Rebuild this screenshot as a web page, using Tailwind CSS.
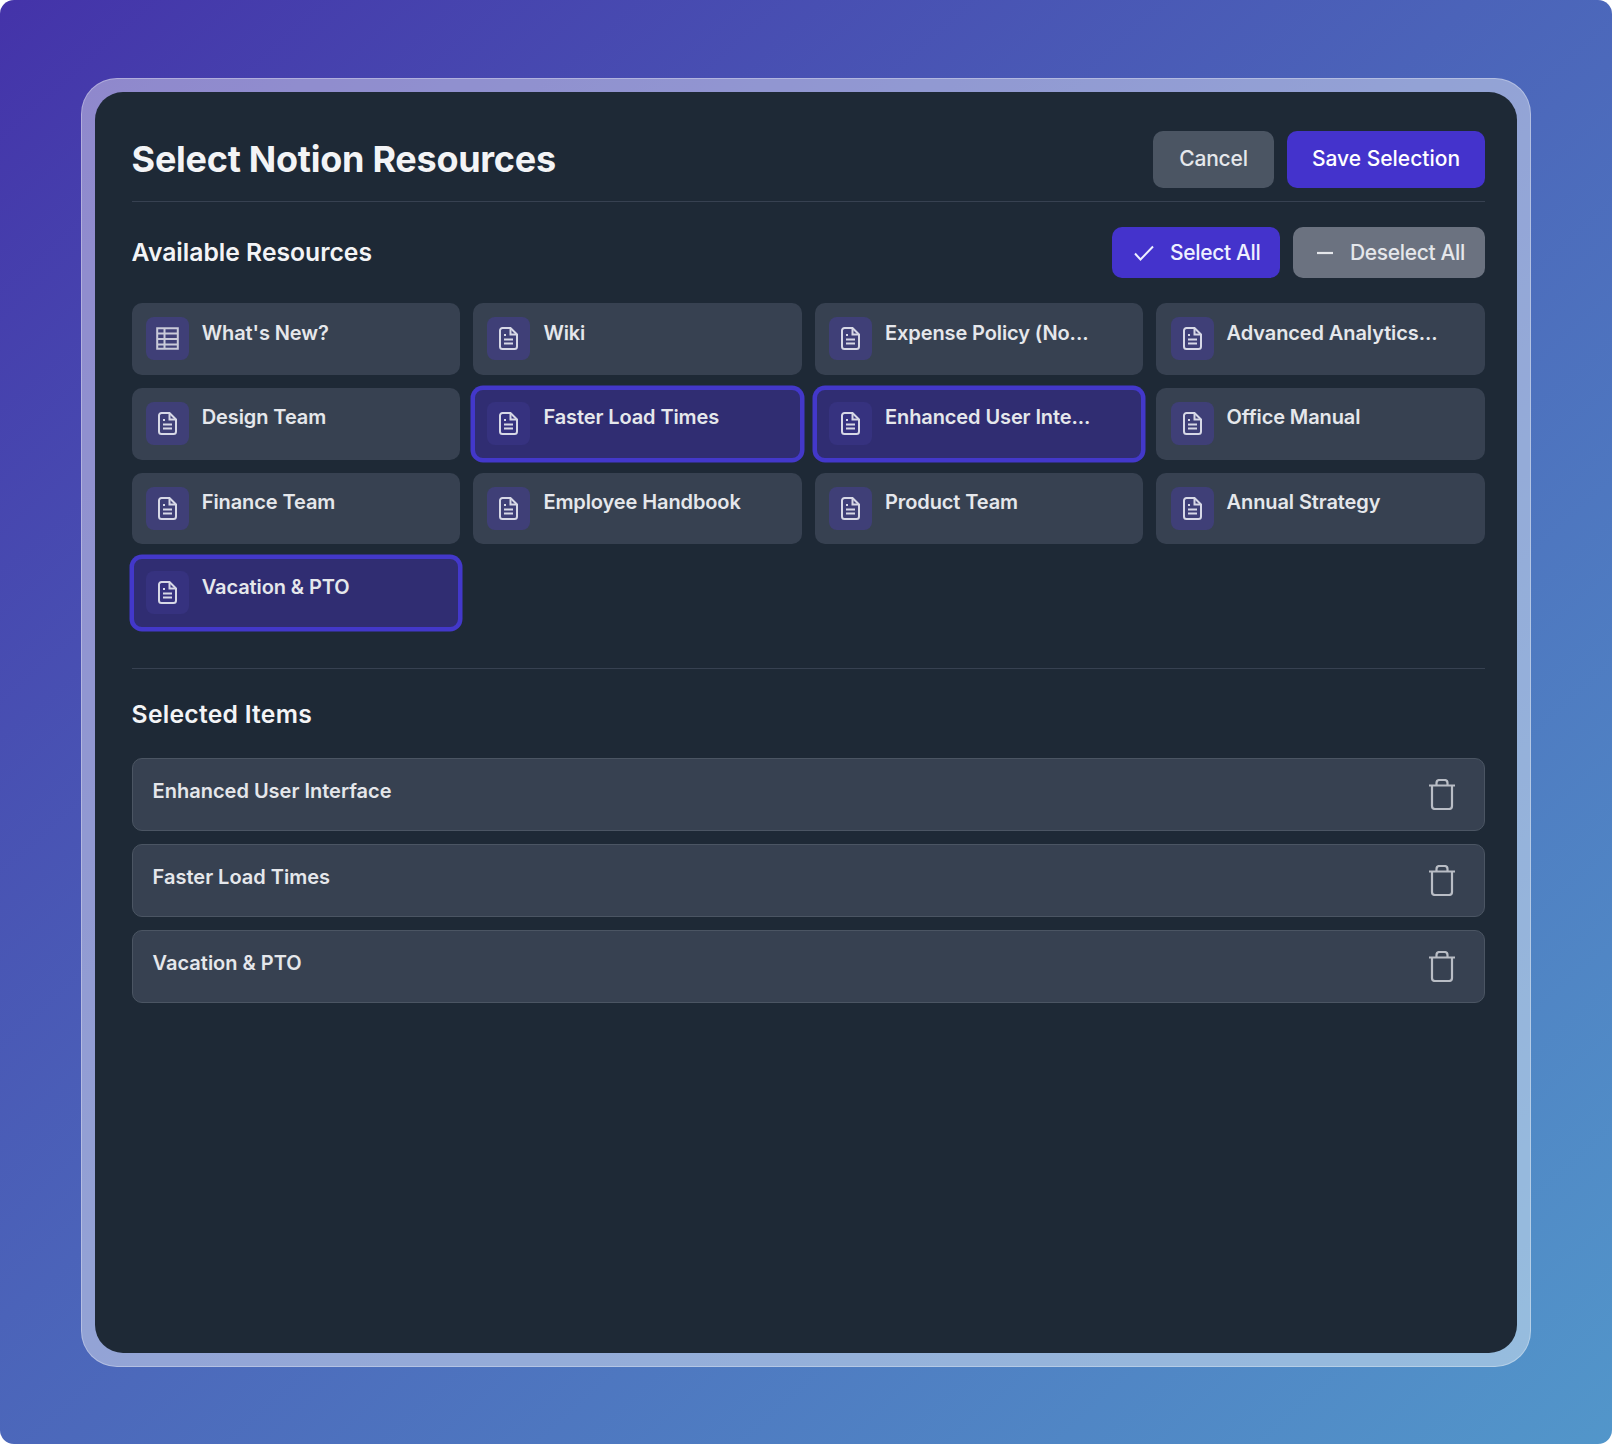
<!DOCTYPE html>
<html lang="en">
<head>
  <meta charset="UTF-8" />
  <title>Select Notion Resources</title>
  <script src="https://cdn.jsdelivr.net/npm/@tailwindcss/browser@4"></script>
</head>
<body class="bg-white">
  <div class="w-[1612px] h-[1444px] rounded-[14px] bg-gradient-to-br from-[#4433a9] to-[#5296ca] pt-[78px] pl-[81px] font-['Inter',sans-serif]">
    <div class="w-[1450px] h-[1289px] rounded-[36px] bg-white/40 border border-white/30 p-[13px]">
      <div class="h-full rounded-[28px] bg-[#1e2936] pt-[38.5px] pl-[36.6px] pr-[32px]">

        <!-- header -->
        <div class="flex items-center justify-between pb-[13px] border-b border-[#374151]">
          <h1 class="text-[36px] leading-[57px] font-bold tracking-[-0.27px] text-[#f3f4f6]">Select Notion Resources</h1>
          <div class="flex gap-[13px]">
            <button class="h-[57px] w-[121px] rounded-[10px] bg-[#4b5563] text-[21px] font-medium tracking-[-0.2px] text-[#e5e7eb]">Cancel</button>
            <button class="h-[57px] w-[198px] rounded-[10px] bg-[#4433cc] text-[21px] font-medium text-white">Save Selection</button>
          </div>
        </div>

        <!-- available -->
        <div class="mt-[25.5px] flex items-center justify-between">
          <h2 class="text-[24.7px] font-semibold text-[#f3f4f6]">Available Resources</h2>
          <div class="flex gap-[13px]">
            <button class="h-[51px] w-[168px] rounded-[10px] bg-[#4433cc] flex items-center pl-[22px] gap-[16px] text-[21px] font-medium tracking-[-0.35px] text-[#eef0ff]">
              <svg class="w-[20px] h-[16px]" viewBox="0 0 20 16" fill="none" stroke="currentColor" stroke-width="2"><path d="M1 8.5l5.5 6L19 1.5"/></svg>
              Select All
            </button>
            <button class="h-[51px] w-[192px] rounded-[10px] bg-[#6b7280] flex items-center pl-[24px] gap-[17px] text-[21px] font-medium tracking-[-0.35px] text-[#e5e7eb]">
              <svg class="w-[16px] h-[16px]" viewBox="0 0 16 16" fill="none" stroke="currentColor" stroke-width="2.2"><path d="M0 8h16"/></svg>
              Deselect All
            </button>
          </div>
        </div>

        <div class="mt-[25px] grid grid-cols-4 gap-x-[13px] gap-y-[13px] auto-rows-[71.8px] tracking-[-0.1px]">
          <div class="rounded-[10px] bg-[#374151] flex items-start gap-[13px] pl-[14.2px] pt-[14px]">
            <span class="w-[43px] h-[43px] rounded-[8px] bg-[#3f3f77] flex items-center justify-center text-[#c9cad9]">
              <svg class="w-[23px] h-[23px]" viewBox="0 0 23 23" fill="none" stroke="currentColor" stroke-width="2"><path d="M1.2 1.2h20.6v20.6H1.2zM1 6.5h21M1 12h21M1 17.5h21M8.5 1v21"/></svg>
            </span>
            <span class="pt-[3px] text-[20px] leading-[26px] font-semibold text-[#e5e7eb]">What's New?</span>
          </div>
          <div class="rounded-[10px] bg-[#374151] flex items-start gap-[13px] pl-[14.2px] pt-[14px]">
            <span class="w-[43px] h-[43px] rounded-[8px] bg-[#3f3f77] flex items-center justify-center text-[#d7d8e6]">
              <svg class="w-[19px] h-[23px]" viewBox="0 0 19 23" fill="none" stroke="currentColor" stroke-width="2"><path d="M3.5 1h8L18 7.5V19.5a2.5 2.5 0 0 1-2.5 2.5h-12A2.5 2.5 0 0 1 1 19.5v-16A2.5 2.5 0 0 1 3.5 1z"/><path d="M11.5 1v6.5H18M5 8h2M5 12.5h9M5 16.5h9"/></svg>
            </span>
            <span class="pt-[3px] text-[20px] leading-[26px] font-semibold text-[#e5e7eb]">Wiki</span>
          </div>
          <div class="rounded-[10px] bg-[#374151] flex items-start gap-[13px] pl-[14.2px] pt-[14px]">
            <span class="w-[43px] h-[43px] rounded-[8px] bg-[#3f3f77] flex items-center justify-center text-[#d7d8e6]">
              <svg class="w-[19px] h-[23px]" viewBox="0 0 19 23" fill="none" stroke="currentColor" stroke-width="2"><path d="M3.5 1h8L18 7.5V19.5a2.5 2.5 0 0 1-2.5 2.5h-12A2.5 2.5 0 0 1 1 19.5v-16A2.5 2.5 0 0 1 3.5 1z"/><path d="M11.5 1v6.5H18M5 8h2M5 12.5h9M5 16.5h9"/></svg>
            </span>
            <span class="pt-[3px] text-[20px] leading-[26px] font-semibold text-[#e5e7eb]">Expense Policy (No...</span>
          </div>
          <div class="rounded-[10px] bg-[#374151] flex items-start gap-[13px] pl-[14.2px] pt-[14px]">
            <span class="w-[43px] h-[43px] rounded-[8px] bg-[#3f3f77] flex items-center justify-center text-[#d7d8e6]">
              <svg class="w-[19px] h-[23px]" viewBox="0 0 19 23" fill="none" stroke="currentColor" stroke-width="2"><path d="M3.5 1h8L18 7.5V19.5a2.5 2.5 0 0 1-2.5 2.5h-12A2.5 2.5 0 0 1 1 19.5v-16A2.5 2.5 0 0 1 3.5 1z"/><path d="M11.5 1v6.5H18M5 8h2M5 12.5h9M5 16.5h9"/></svg>
            </span>
            <span class="pt-[3px] text-[20px] leading-[26px] font-semibold text-[#e5e7eb]">Advanced Analytics...</span>
          </div>

          <div class="rounded-[10px] bg-[#374151] flex items-start gap-[13px] pl-[14.2px] pt-[14px]">
            <span class="w-[43px] h-[43px] rounded-[8px] bg-[#3f3f77] flex items-center justify-center text-[#d7d8e6]">
              <svg class="w-[19px] h-[23px]" viewBox="0 0 19 23" fill="none" stroke="currentColor" stroke-width="2"><path d="M3.5 1h8L18 7.5V19.5a2.5 2.5 0 0 1-2.5 2.5h-12A2.5 2.5 0 0 1 1 19.5v-16A2.5 2.5 0 0 1 3.5 1z"/><path d="M11.5 1v6.5H18M5 8h2M5 12.5h9M5 16.5h9"/></svg>
            </span>
            <span class="pt-[2px] text-[20px] leading-[26px] font-semibold text-[#e5e7eb]">Design Team</span>
          </div>
          <div class="rounded-[10px] bg-[#302d72] border-2 border-[#4338ca] ring-[2.5px] ring-[#4338ca] flex items-start gap-[13px] pl-[12.2px] pt-[12px]">
            <span class="w-[43px] h-[43px] rounded-[8px] bg-[#36327f] flex items-center justify-center text-[#d7d8e6]">
              <svg class="w-[19px] h-[23px]" viewBox="0 0 19 23" fill="none" stroke="currentColor" stroke-width="2"><path d="M3.5 1h8L18 7.5V19.5a2.5 2.5 0 0 1-2.5 2.5h-12A2.5 2.5 0 0 1 1 19.5v-16A2.5 2.5 0 0 1 3.5 1z"/><path d="M11.5 1v6.5H18M5 8h2M5 12.5h9M5 16.5h9"/></svg>
            </span>
            <span class="pt-[2px] text-[20px] leading-[26px] font-semibold text-[#e5e7eb]">Faster Load Times</span>
          </div>
          <div class="rounded-[10px] bg-[#302d72] border-2 border-[#4338ca] ring-[2.5px] ring-[#4338ca] flex items-start gap-[13px] pl-[12.2px] pt-[12px]">
            <span class="w-[43px] h-[43px] rounded-[8px] bg-[#36327f] flex items-center justify-center text-[#d7d8e6]">
              <svg class="w-[19px] h-[23px]" viewBox="0 0 19 23" fill="none" stroke="currentColor" stroke-width="2"><path d="M3.5 1h8L18 7.5V19.5a2.5 2.5 0 0 1-2.5 2.5h-12A2.5 2.5 0 0 1 1 19.5v-16A2.5 2.5 0 0 1 3.5 1z"/><path d="M11.5 1v6.5H18M5 8h2M5 12.5h9M5 16.5h9"/></svg>
            </span>
            <span class="pt-[2px] text-[20px] leading-[26px] font-semibold text-[#e5e7eb]">Enhanced User Inte...</span>
          </div>
          <div class="rounded-[10px] bg-[#374151] flex items-start gap-[13px] pl-[14.2px] pt-[14px]">
            <span class="w-[43px] h-[43px] rounded-[8px] bg-[#3f3f77] flex items-center justify-center text-[#d7d8e6]">
              <svg class="w-[19px] h-[23px]" viewBox="0 0 19 23" fill="none" stroke="currentColor" stroke-width="2"><path d="M3.5 1h8L18 7.5V19.5a2.5 2.5 0 0 1-2.5 2.5h-12A2.5 2.5 0 0 1 1 19.5v-16A2.5 2.5 0 0 1 3.5 1z"/><path d="M11.5 1v6.5H18M5 8h2M5 12.5h9M5 16.5h9"/></svg>
            </span>
            <span class="pt-[2px] text-[20px] leading-[26px] font-semibold text-[#e5e7eb]">Office Manual</span>
          </div>

          <div class="rounded-[10px] bg-[#374151] flex items-start gap-[13px] pl-[14.2px] pt-[14px]">
            <span class="w-[43px] h-[43px] rounded-[8px] bg-[#3f3f77] flex items-center justify-center text-[#d7d8e6]">
              <svg class="w-[19px] h-[23px]" viewBox="0 0 19 23" fill="none" stroke="currentColor" stroke-width="2"><path d="M3.5 1h8L18 7.5V19.5a2.5 2.5 0 0 1-2.5 2.5h-12A2.5 2.5 0 0 1 1 19.5v-16A2.5 2.5 0 0 1 3.5 1z"/><path d="M11.5 1v6.5H18M5 8h2M5 12.5h9M5 16.5h9"/></svg>
            </span>
            <span class="pt-[2px] text-[20px] leading-[26px] font-semibold text-[#e5e7eb]">Finance Team</span>
          </div>
          <div class="rounded-[10px] bg-[#374151] flex items-start gap-[13px] pl-[14.2px] pt-[14px]">
            <span class="w-[43px] h-[43px] rounded-[8px] bg-[#3f3f77] flex items-center justify-center text-[#d7d8e6]">
              <svg class="w-[19px] h-[23px]" viewBox="0 0 19 23" fill="none" stroke="currentColor" stroke-width="2"><path d="M3.5 1h8L18 7.5V19.5a2.5 2.5 0 0 1-2.5 2.5h-12A2.5 2.5 0 0 1 1 19.5v-16A2.5 2.5 0 0 1 3.5 1z"/><path d="M11.5 1v6.5H18M5 8h2M5 12.5h9M5 16.5h9"/></svg>
            </span>
            <span class="pt-[2px] text-[20px] leading-[26px] font-semibold text-[#e5e7eb]">Employee Handbook</span>
          </div>
          <div class="rounded-[10px] bg-[#374151] flex items-start gap-[13px] pl-[14.2px] pt-[14px]">
            <span class="w-[43px] h-[43px] rounded-[8px] bg-[#3f3f77] flex items-center justify-center text-[#d7d8e6]">
              <svg class="w-[19px] h-[23px]" viewBox="0 0 19 23" fill="none" stroke="currentColor" stroke-width="2"><path d="M3.5 1h8L18 7.5V19.5a2.5 2.5 0 0 1-2.5 2.5h-12A2.5 2.5 0 0 1 1 19.5v-16A2.5 2.5 0 0 1 3.5 1z"/><path d="M11.5 1v6.5H18M5 8h2M5 12.5h9M5 16.5h9"/></svg>
            </span>
            <span class="pt-[2px] text-[20px] leading-[26px] font-semibold text-[#e5e7eb]">Product Team</span>
          </div>
          <div class="rounded-[10px] bg-[#374151] flex items-start gap-[13px] pl-[14.2px] pt-[14px]">
            <span class="w-[43px] h-[43px] rounded-[8px] bg-[#3f3f77] flex items-center justify-center text-[#d7d8e6]">
              <svg class="w-[19px] h-[23px]" viewBox="0 0 19 23" fill="none" stroke="currentColor" stroke-width="2"><path d="M3.5 1h8L18 7.5V19.5a2.5 2.5 0 0 1-2.5 2.5h-12A2.5 2.5 0 0 1 1 19.5v-16A2.5 2.5 0 0 1 3.5 1z"/><path d="M11.5 1v6.5H18M5 8h2M5 12.5h9M5 16.5h9"/></svg>
            </span>
            <span class="pt-[2px] text-[20px] leading-[26px] font-semibold text-[#e5e7eb]">Annual Strategy</span>
          </div>

          <div class="rounded-[10px] bg-[#302d72] border-2 border-[#4338ca] ring-[2.5px] ring-[#4338ca] flex items-start gap-[13px] pl-[12.2px] pt-[12px]">
            <span class="w-[43px] h-[43px] rounded-[8px] bg-[#36327f] flex items-center justify-center text-[#d7d8e6]">
              <svg class="w-[19px] h-[23px]" viewBox="0 0 19 23" fill="none" stroke="currentColor" stroke-width="2"><path d="M3.5 1h8L18 7.5V19.5a2.5 2.5 0 0 1-2.5 2.5h-12A2.5 2.5 0 0 1 1 19.5v-16A2.5 2.5 0 0 1 3.5 1z"/><path d="M11.5 1v6.5H18M5 8h2M5 12.5h9M5 16.5h9"/></svg>
            </span>
            <span class="pt-[3px] text-[20px] leading-[26px] font-semibold text-[#e5e7eb]">Vacation &amp; PTO</span>
          </div>
        </div>

        <!-- selected -->
        <div class="mt-[39px] border-t border-[#374151] pt-[28px]">
          <h2 class="text-[24.7px] leading-[34px] font-semibold tracking-[0.25px] text-[#f3f4f6]">Selected Items</h2>
          <div class="mt-[27px] flex flex-col gap-[13.3px]">
            <div class="h-[72.7px] rounded-[10px] bg-[#374151] border border-[#4b5563] flex items-start justify-between pl-[20px] pr-[29px] pt-[19px]">
              <span class="text-[20px] leading-[26px] font-semibold text-[#e5e7eb]">Enhanced User Interface</span>
              <svg class="w-[26px] h-[31px] mt-[1px] text-[#b9bdc5]" viewBox="0 0 26 31" fill="none" stroke="currentColor" stroke-width="2.2"><path d="M0 6.5h26M7.5 6.5V4a3 3 0 0 1 3-3h5a3 3 0 0 1 3 3v2.5M3 6.5V27a3 3 0 0 0 3 3h14a3 3 0 0 0 3-3V6.5"/></svg>
            </div>
            <div class="h-[72.7px] rounded-[10px] bg-[#374151] border border-[#4b5563] flex items-start justify-between pl-[20px] pr-[29px] pt-[19px]">
              <span class="text-[20px] leading-[26px] font-semibold text-[#e5e7eb]">Faster Load Times</span>
              <svg class="w-[26px] h-[31px] mt-[1px] text-[#b9bdc5]" viewBox="0 0 26 31" fill="none" stroke="currentColor" stroke-width="2.2"><path d="M0 6.5h26M7.5 6.5V4a3 3 0 0 1 3-3h5a3 3 0 0 1 3 3v2.5M3 6.5V27a3 3 0 0 0 3 3h14a3 3 0 0 0 3-3V6.5"/></svg>
            </div>
            <div class="h-[72.7px] rounded-[10px] bg-[#374151] border border-[#4b5563] flex items-start justify-between pl-[20px] pr-[29px] pt-[19px]">
              <span class="text-[20px] leading-[26px] font-semibold text-[#e5e7eb]">Vacation &amp; PTO</span>
              <svg class="w-[26px] h-[31px] mt-[1px] text-[#b9bdc5]" viewBox="0 0 26 31" fill="none" stroke="currentColor" stroke-width="2.2"><path d="M0 6.5h26M7.5 6.5V4a3 3 0 0 1 3-3h5a3 3 0 0 1 3 3v2.5M3 6.5V27a3 3 0 0 0 3 3h14a3 3 0 0 0 3-3V6.5"/></svg>
            </div>
          </div>
        </div>

      </div>
    </div>
  </div>
</body>
</html>
